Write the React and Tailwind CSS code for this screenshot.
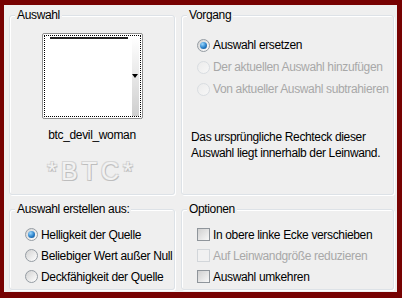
import React from "react";

function Group({ label, className = "", children }) {
  return (
    <div
      className={`relative rounded-[3px] border border-[#dde2e7] shadow-[inset_1px_1px_0_#ffffff,1px_1px_0_#ffffff] ${className}`}
    >
      <span className="absolute left-[5px] top-[-8px] whitespace-nowrap bg-[#efefef] px-[2px] leading-[14px] text-black">
        {label}
      </span>
      {children}
    </div>
  );
}

function Radio({ checked, disabled, label }) {
  return (
    <div className="flex h-[22px] items-center gap-[3px] whitespace-nowrap">
      {disabled ? (
        <span className="h-[13px] w-[13px] shrink-0 rounded-full border border-[#d9dde1] bg-[linear-gradient(135deg,#ececec,#f7f7f7)]" />
      ) : (
        <span className="flex h-[13px] w-[13px] shrink-0 items-center justify-center rounded-full border border-[#959ca3] bg-[linear-gradient(135deg,#d2d2d2,#ffffff)]">
          {checked && (
            <span className="h-[7px] w-[7px] rounded-full bg-[radial-gradient(circle_at_35%_30%,#9ad8ff,#2a80c8_55%,#0d4a8a)]" />
          )}
        </span>
      )}
      <span className={disabled ? "text-[#a8a8a8]" : "text-black"}>{label}</span>
    </div>
  );
}

function Check({ disabled, label }) {
  return (
    <div className="flex h-[21px] items-center gap-[3px] whitespace-nowrap">
      {disabled ? (
        <span className="h-[13px] w-[13px] shrink-0 border border-[#d2d6da] bg-[#f1f1f1]" />
      ) : (
        <span className="h-[13px] w-[13px] shrink-0 border border-[#8f959b] bg-[linear-gradient(135deg,#d0d0d0,#f8f8f8)]" />
      )}
      <span className={disabled ? "text-[#a8a8a8]" : "text-black"}>{label}</span>
    </div>
  );
}

export default function App() {
  return (
    <div className="h-[298px] w-[402px] bg-[#770202] pb-[6px] pl-[4px] pr-[5px] pt-[5px] font-['Liberation_Sans',Arial,sans-serif] text-[12px] tracking-[-0.35px] leading-[14px]">
      <div className="grid h-[287px] w-[393px] grid-cols-[166px_213px] grid-rows-[180px_81px] gap-x-[6px] gap-y-[14px] bg-[#efefef] pl-[5px] pt-[10px]">
        <Group label="Auswahl" className="flex flex-col items-center pt-[17px]">
          <div className="relative h-[86px] w-[101px] rounded-[2px] border border-[#8f8f8f] bg-white p-[1px]">
            <div className="relative h-full w-full border border-dotted border-black">
              <div className="absolute left-[5px] top-[1px] h-[2px] w-[78px] bg-[#222]" />
              <div className="absolute right-[1px] top-[2px] h-[78px] w-[7px] bg-[linear-gradient(180deg,#ffffff,#cfcfcf)]" />
              <div className="absolute right-[2px] top-[38px] h-0 w-0 border-l-[3px] border-r-[3px] border-t-[4px] border-l-transparent border-r-transparent border-t-black" />
            </div>
          </div>
          <div className="mt-[9px] text-black">btc_devil_woman</div>
          <div className="mt-[15px] text-[25px] leading-[28px] tracking-[4px] text-[#f2f2f2] [text-shadow:1px_1px_0_#bdbdbd,-1px_-1px_0_#d6d6d6,1px_-1px_0_#d6d6d6,-1px_1px_0_#c8c8c8]">
            *BTC*
          </div>
        </Group>

        <Group label="Vorgang" className="pl-[15px] pt-[18px]">
          <Radio checked label="Auswahl ersetzen" />
          <Radio disabled label="Der aktuellen Auswahl hinzufügen" />
          <Radio disabled label="Von aktueller Auswahl subtrahieren" />
          <p className="ml-[-6px] mt-[29px] leading-[16px] text-black">
            Das ursprüngliche Rechteck dieser
            <br />
            Auswahl liegt innerhalb der Leinwand.
          </p>
        </Group>

        <Group label="Auswahl erstellen aus:" className="pl-[15px] pt-[14px] [&>div]:h-[21px]">
          <Radio checked label="Helligkeit der Quelle" />
          <Radio label="Beliebiger Wert außer Null" />
          <Radio label="Deckfähigkeit der Quelle" />
        </Group>

        <Group label="Optionen" className="pl-[15px] pt-[14px]">
          <Check label="In obere linke Ecke verschieben" />
          <Check disabled label="Auf Leinwandgröße reduzieren" />
          <Check label="Auswahl umkehren" />
        </Group>
      </div>
    </div>
  );
}
